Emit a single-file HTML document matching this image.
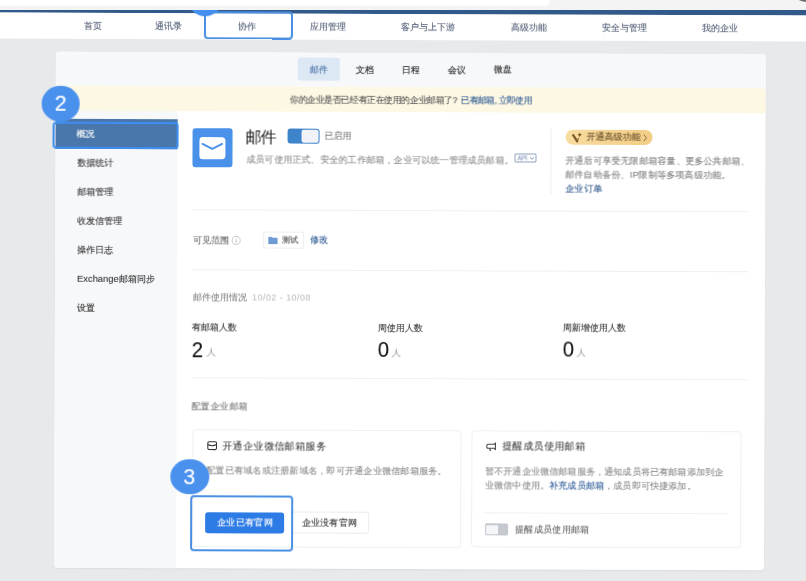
<!DOCTYPE html>
<html><head><meta charset="utf-8">
<style>
*{margin:0;padding:0;box-sizing:border-box}
html,body{width:806px;height:581px;overflow:hidden}
.t{will-change:transform;-webkit-text-stroke-width:0.1px}
body{background:#e8e9eb;font-family:"Liberation Sans",sans-serif;position:relative;color:#333}
.abs{position:absolute}
.t{position:absolute;white-space:nowrap;line-height:1}
#topstrip{left:0;top:0;width:806px;height:10px;background:#f4f4f4;z-index:5}
#topbox{left:0;top:0;width:550px;height:6px;background:#fff;border-bottom-right-radius:6px;z-index:6}


.nv{font-size:9.4px;color:#56627a}
.circle{position:absolute;border-radius:50%;background:#4390ee;color:#fff;text-align:center;font-family:"Liberation Sans",sans-serif;z-index:4}
.hl{position:absolute;border:2px solid #4a90e2;border-radius:4px;z-index:3}




.tab{font-size:9.4px;color:#222}
.si{font-size:9.4px;color:#333}
.gray{color:#8a8a8a}
.link{color:#2f5d98}
</style></head><body><div id="topstrip" class="abs"></div>
<div id="topbox" class="abs"></div>
<div class="abs" style="left:797px;top:-8px;width:20px;height:10px;border-radius:50%;background:#6a6a6a;z-index:7"></div>
<div id="page" style="position:absolute;left:0;top:0;width:806px;height:581px;transform:rotate(0.2120deg);transform-origin:403.0px 290.0px">

<div class="abs" style="top:-6px;left:-20px;width:846px;height:19.9px;background:#31598a"></div>
<div class="abs" style="top:13.9px;left:-20px;width:846px;height:26.5px;background:#fff"></div>
<div class="t nv" style="left:82.6px;top:21.98px">首页</div>
<div class="t nv" style="left:154.4px;top:21.98px">通讯录</div>
<div class="t nv" style="left:236.7px;top:21.98px">协作</div>
<div class="t nv" style="left:308.7px;top:21.98px">应用管理</div>
<div class="t nv" style="left:400.2px;top:21.98px">客户与上下游</div>
<div class="t nv" style="left:509.6px;top:21.98px">高级功能</div>
<div class="t nv" style="left:600.6px;top:21.98px">安全与管理</div>
<div class="t nv" style="left:700.7px;top:21.98px">我的企业</div>
<div class="circle" style="left:186.86px;top:-17.2px;width:34px;height:34px"></div>
<div class="hl" style="left:202.97px;top:11.74px;width:89px;height:28px"></div>

<div class="abs" style="left:55.12px;top:53.28px;width:709.82px;height:515.78px;background:#fff;border-radius:3px;box-shadow:0 1px 2px rgba(0,0,0,.06)"></div>
<div class="abs" style="left:55.12px;top:53.28px;width:709.82px;height:33.5px;background:#f7f8fa;border-radius:3px 3px 0 0"></div>
<div class="abs" style="left:297.14px;top:58.39px;width:41.5px;height:22.5px;background:#dde8f5;border-radius:3px"></div>
<div class="t tab" style="left:308.97px;top:65.04px;color:#4a73a8">邮件</div>
<div class="t tab" style="left:354.67px;top:64.88px">文档</div>
<div class="t tab" style="left:401.37px;top:64.7px">日程</div>
<div class="t tab" style="left:446.97px;top:64.53px">会议</div>
<div class="t tab" style="left:492.57px;top:64.37px">微盘</div>
<div class="abs" style="left:55.12px;top:86.78px;width:709.82px;height:25.3px;background:#fdf8e4"></div>
<div class="t" style="left:288.88px;top:95.92px;font-size:9px;letter-spacing:-0.43px;color:#555">你的企业是否已经有正在使用的企业邮箱了? <span style="color:#2e5a92;margin-left:1.8px;letter-spacing:-0.62px">已有邮箱, 立即使用</span></div>
<div class="abs" style="left:55.12px;top:112.08px;width:121.4px;height:456.98px;background:#f7f8fa;border-radius:0 0 0 3px"></div>
<div class="abs" style="left:55.12px;top:120.28px;width:121.4px;height:30px;background:#4a77ab"></div>
<div class="t si" style="left:76.4px;top:129.71px;color:#fff">概况</div>
<div class="t si" style="left:76.51px;top:159.41px">数据统计</div>
<div class="t si" style="left:76.62px;top:188.21px">邮箱管理</div>
<div class="t si" style="left:76.72px;top:216.71px">收发信管理</div>
<div class="t si" style="left:76.83px;top:245.71px">操作日志</div>
<div class="t si" style="left:76.94px;top:274.71px">Exchange邮箱同步</div>
<div class="t si" style="left:77.05px;top:303.71px">设置</div>
<div class="hl" style="left:52.38px;top:122.8px;width:126px;height:27.5px;border-width:2.5px;border-color:#3d8ef0;z-index:2"></div>
<div class="circle" style="left:41.05px;top:87.34px;width:38px;height:35.2px;background:#4a91ee"></div><div class="t" style="left:53.67px;top:95.29px;font-size:21.5px;color:#fff;z-index:5">2</div>

<!-- content -->
<div class="abs" style="left:192.4px;top:128.78px;width:39.5px;height:39.5px;background:#4a91ea;border-radius:3px"></div>
<svg class="abs" style="left:198.43px;top:136.75px" width="28" height="24" viewBox="0 0 28 24"><rect x="0.9" y="0.8" width="26" height="22.2" rx="3.5" fill="#fff"/><path d="M4 7.6 L13.8 12.6 L23.6 7.6" stroke="#4a91ea" stroke-width="1.9" fill="none" stroke-linecap="round" stroke-linejoin="round"/></svg>
<div class="t" style="left:245.21px;top:130.08px;font-size:16px;letter-spacing:-1px;color:#111;-webkit-text-stroke-width:0">邮件</div>
<div class="abs" style="left:287.1px;top:129.43px;width:31.5px;height:15px;border-radius:3px;background:#3d84cb;overflow:hidden">
  <div class="abs" style="top:1px;left:14.3px;width:16.2px;height:13px;background:#f2f3f9;border-radius:2px"></div>
</div>
<div class="t" style="left:324.41px;top:131.79px;font-size:9px;color:#777">已启用</div>
<div class="t" style="left:245.5px;top:156.08px;font-size:9px;letter-spacing:0.21px;color:#8c8c8c">成员可使用正式、安全的工作邮箱，企业可以统一管理成员邮箱。</div>
<div class="abs" style="left:514.49px;top:152.59px;width:22px;height:9.7px;border:1px solid #8ea3c0;border-radius:1.5px"></div>
<div class="t" style="left:517.3px;top:154.58px;font-size:6.3px;letter-spacing:-0.2px;color:#8097b8">API</div>
<svg class="abs" style="left:529px;top:155.53px" width="5" height="4" viewBox="0 0 5 4"><path d="M0.6 1 L2.5 2.8 L4.4 1" stroke="#6f87a8" stroke-width="0.9" fill="none"/></svg>
<div class="abs" style="left:550.4px;top:128.45px;width:1px;height:66px;background:#f0f0f0"></div>
<div class="abs" style="left:564.91px;top:129.1px;width:87.5px;height:15.3px;border-radius:8px;background:linear-gradient(90deg,#f8dca0,#f3cd85)"></div>
<div class="t" style="left:585.92px;top:132.32px;font-size:9px;color:#634a26">开通高级功能</div>
<svg class="abs" style="left:641.42px;top:132.12px" width="7" height="10" viewBox="0 0 7 10"><path d="M2.2 1.8 L5 5 L2.2 8.2" stroke="#7a5d30" stroke-width="0.9" fill="none"/></svg>
<svg class="abs" style="left:571.41px;top:131.17px" width="12" height="12" viewBox="0 0 12 12"><path d="M1.6 3.6 L5.6 9.6" stroke="#7f5f2a" stroke-width="2.3" stroke-linecap="round"/><path d="M5.8 9.6 L6.9 6.6" stroke="#7f5f2a" stroke-width="1" stroke-linecap="round"/><path d="M8.1 0.8 Q8.5 2.8 10.5 3.2 Q8.5 3.6 8.1 5.6 Q7.7 3.6 5.7 3.2 Q7.7 2.8 8.1 0.8Z" fill="#7f5f2a"/></svg>
<div class="t" style="left:564.5px;top:153.9px;font-size:9px;letter-spacing:0.21px;color:#7f7f7f;line-height:13.6px">开通后可享受无限邮箱容量、更多公共邮箱、<br>邮件自动备份、IP限制等多项高级功能。</div>
<div class="t" style="left:564.61px;top:183.9px;font-size:9px;letter-spacing:0.4px;color:#2c548a">企业订单</div>
<div class="abs" style="left:191.7px;top:210.28px;width:557px;height:1px;background:#f0f0f0"></div>
<div class="t" style="left:192.8px;top:237.28px;font-size:9px;color:#666">可见范围</div>
<svg class="abs" style="left:231.3px;top:235.63px" width="10" height="10" viewBox="0 0 10 10"><circle cx="5" cy="5" r="4" fill="none" stroke="#c4c4c4" stroke-width="0.9"/><path d="M5 4.3 V7.2 M5 2.6 V3.3" stroke="#b0b0b0" stroke-width="0.9"/></svg>
<div class="abs" style="left:263.28px;top:232.02px;width:41px;height:17px;border:1px solid #eee;border-radius:2px"></div>
<svg class="abs" style="left:267.8px;top:237px" width="10" height="8" viewBox="0 0 10 8"><path d="M0 0.3 h3.6 l1 1 h4.8 v6.4 h-9.4z" fill="#6e9bd3"/></svg>
<div class="t" style="left:281.8px;top:237.45px;font-size:8px;color:#444">测试</div>
<div class="t" style="left:309.79px;top:234.84px;font-size:9.4px;color:#2f5b93">修改</div>
<div class="abs" style="left:191.92px;top:269.78px;width:557px;height:1px;background:#f0f0f0"></div>
<div class="t" style="left:192.51px;top:293.78px;font-size:9px;color:#888">邮件使用情况 <span style="color:#c2c2c2;font-size:9px;letter-spacing:0.45px;margin-left:2.5px">10/02 - 10/08</span></div>
<div class="t" style="left:192.12px;top:324.28px;font-size:9.3px;color:#333">有邮箱人数</div>
<div class="t" style="left:377.62px;top:323.59px;font-size:9.3px;color:#333">周使用人数</div>
<div class="t" style="left:562.62px;top:322.91px;font-size:9.3px;color:#333">周新增使用人数</div>
<div class="t" style="left:191.68px;top:339.58px;font-size:22px;color:#111;transform:scaleX(0.92);transform-origin:0 0">2</div>
<div class="t" style="left:206.72px;top:349.23px;font-size:9px;color:#999">人</div>
<div class="t" style="left:377.68px;top:338.89px;font-size:22px;color:#111;transform:scaleX(0.92);transform-origin:0 0">0</div>
<div class="t" style="left:392.22px;top:348.54px;font-size:9px;color:#999">人</div>
<div class="t" style="left:562.68px;top:338.41px;font-size:22px;color:#111;transform:scaleX(0.92);transform-origin:0 0">0</div>
<div class="t" style="left:577.22px;top:347.86px;font-size:9px;color:#999">人</div>
<div class="abs" style="left:192.32px;top:378.28px;width:557px;height:1px;background:#f0f0f0"></div>
<div class="t" style="left:192.42px;top:403.28px;font-size:9px;letter-spacing:0.4px;color:#777">配置企业邮箱</div>
<div class="abs" style="left:192.51px;top:429.78px;width:269px;height:118.5px;border:1px solid #f0f0f0;border-radius:4px"></div>
<svg class="abs" style="left:206.56px;top:440.73px" width="11" height="11" viewBox="0 0 11 11"><rect x="1.4" y="1.5" width="8.7" height="7.8" rx="1.3" fill="none" stroke="#333" stroke-width="1.05"/><path d="M1.4 4.2 Q5.75 6.6 10.1 4.2" stroke="#333" stroke-width="1.05" fill="none"/></svg>
<div class="t" style="left:223.06px;top:441.67px;font-size:10px;letter-spacing:0.4px;color:#1f1f1f;-webkit-text-stroke-width:0">开通企业微信邮箱服务</div>
<div class="t" style="left:206.65px;top:467.23px;font-size:9px;letter-spacing:0.25px;color:#888">配置已有域名或注册新域名，即可开通企业微信邮箱服务。</div>
<div class="abs" style="left:205.82px;top:512.73px;width:79px;height:21px;background:#2d7be5;border-radius:3px"></div>
<div class="t" style="left:217.85px;top:519.19px;font-size:9px;letter-spacing:0.35px;color:#fff">企业已有官网</div>
<div class="abs" style="left:292.32px;top:512.41px;width:77.5px;height:21.3px;border:1px solid #ececec;border-radius:3px"></div>
<div class="t" style="left:303.35px;top:518.87px;font-size:9px;letter-spacing:0.15px;color:#333">企业没有官网</div>
<div class="abs" style="left:472.02px;top:430.25px;width:269.5px;height:117px;border:1px solid #f0f0f0;border-radius:4px"></div>
<svg class="abs" style="left:485.56px;top:440.7px" width="12" height="11" viewBox="0 0 12 11"><path d="M2.6 3 H8.8 L10 1.6 V8.4 L8.8 7 H2.6 Q1.4 7 1.4 5.8 V4.2 Q1.4 3 2.6 3 Z" fill="none" stroke="#444" stroke-width="1.05" stroke-linejoin="round"/><path d="M4.4 7 L5 9.6" stroke="#444" stroke-width="1.3"/></svg>
<div class="t" style="left:503.06px;top:440.63px;font-size:10px;letter-spacing:0.4px;color:#1f1f1f;-webkit-text-stroke-width:0">提醒成员使用邮箱</div>
<div class="t" style="left:486.15px;top:464.69px;font-size:9px;letter-spacing:0.16px;color:#8a8a8a;line-height:13.9px">暂不开通企业微信邮箱服务，通知成员将已有邮箱添加到企<br>业微信中使用。<span class="link">补充成员邮箱</span>，成员即可快捷添加。</div>
<div class="abs" style="left:485.32px;top:511.7px;width:244px;height:1px;background:#f0f0f0"></div>
<div class="abs" style="left:485.86px;top:523.2px;width:23.5px;height:12px;background:#c5c9cf;border-radius:1.5px;overflow:hidden"><div class="abs" style="top:1.5px;left:1.5px;width:11.8px;height:9.3px;background:#f4f5f8;border-radius:1px"></div></div>
<div class="t" style="left:515.87px;top:524.59px;font-size:9px;letter-spacing:0.35px;color:#666">提醒成员使用邮箱</div>
<div class="hl" style="left:190.76px;top:495.99px;width:103.6px;height:56.4px"></div>
<div class="circle" style="left:171.43px;top:460.06px;width:38.2px;height:35.4px;background:#4a91ee"></div><div class="t" style="left:184.45px;top:467.81px;font-size:21.5px;color:#fff;z-index:5">3</div>

</div>
</body></html>
